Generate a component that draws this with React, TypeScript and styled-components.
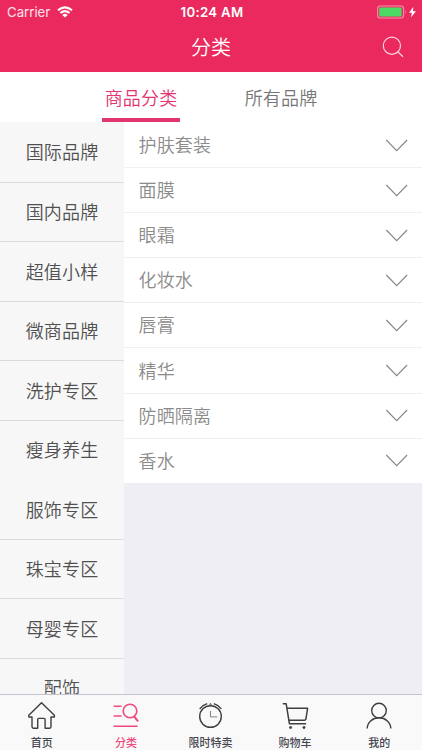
import React from "react";
import styled, { createGlobalStyle } from "styled-components";

const Global = createGlobalStyle`
  * { box-sizing: border-box; }
  html, body { margin: 0; padding: 0; }
  body { font-family: "Noto Sans CJK SC", "PingFang SC", sans-serif; background: #efeef4; }
`;

const Screen = styled.div`
  width: 422px;
  height: 750px;
  display: flex;
  flex-direction: column;
  overflow: hidden;
  background: #efeef4;
`;

const Header = styled.header`
  flex: none;
  height: 72px;
  background: #ea2a5f;
  color: #fff;
`;

const StatusBar = styled.div`
  height: 24px;
  display: grid;
  grid-template-columns: 1fr auto 1fr;
  align-items: center;
  padding: 0 5px 0 7px;
  font-family: Inter, "Liberation Sans", sans-serif;
`;

const Carrier = styled.div`
  display: flex;
  align-items: center;
  gap: 7px;
  font-size: 13.2px;
  line-height: 24px;
  color: #fde3ea;
`;

const Clock = styled.div`
  font-size: 13.2px;
  font-weight: 600;
  line-height: 24px;
  letter-spacing: 0.3px;
`;

const Battery = styled.div`
  display: flex;
  justify-content: flex-end;
`;

const TitleBar = styled.div`
  height: 48px;
  display: grid;
  grid-template-columns: 1fr auto 1fr;
  align-items: center;
  padding: 0 18px 2px;
`;

const Title = styled.h1`
  grid-column: 2;
  margin: 0;
  font-size: 20px;
  font-weight: 350;
  line-height: 30px;
`;

const SearchButton = styled.button`
  justify-self: end;
  display: flex;
  padding: 0;
  border: 0;
  background: none;
`;

const Tabs = styled.nav`
  flex: none;
  height: 50px;
  display: flex;
  justify-content: center;
  gap: 62px;
  background: #fff;
`;

const Tab = styled.div<{ $active?: boolean }>`
  width: 78px;
  height: 50px;
  padding-top: 11px;
  text-align: center;
  white-space: nowrap;
  font-size: 18px;
  line-height: 28px;
  font-weight: 350;
  letter-spacing: 0.15px;
  color: ${(p) => (p.$active ? "#e2356f" : "#777")};
  border-bottom: 4px solid ${(p) => (p.$active ? "#e2356f" : "transparent")};
`;

const Content = styled.main`
  flex: 1;
  min-height: 0;
  display: flex;
  overflow: hidden;
`;

const Sidebar = styled.aside`
  flex: none;
  width: 124px;
  background: #f7f7f7;
`;

const Category = styled.div<{ $divider: boolean }>`
  height: 59.55px;
  display: flex;
  align-items: center;
  justify-content: center;
  padding-bottom: 0.6px;
  font-size: 18px;
  line-height: 28px;
  font-weight: 350;
  letter-spacing: 0.15px;
  color: #505050;
  box-shadow: ${(p) => (p.$divider ? "0 1px 0 #dbdbdb" : "none")};
`;

const Sublist = styled.div`
  flex: 1;
`;

const SubRow = styled.div`
  height: 45.1px;
  display: flex;
  align-items: center;
  justify-content: space-between;
  padding: 0 14px 1px 14.5px;
  background: #fff;
  font-size: 18px;
  line-height: 28px;
  font-weight: 350;
  letter-spacing: 0.15px;
  color: #8b8b8b;
  svg { margin-top: 2px; }
  & + & { box-shadow: inset 0 1px 0 #f0f0f2; }
`;

const TabBar = styled.footer`
  flex: none;
  height: 56px;
  display: grid;
  grid-template-columns: repeat(5, 1fr);
  border-top: 1px solid #c5c4ce;
  background: #f9f9f9;
`;

const TabItem = styled.div<{ $active?: boolean }>`
  display: flex;
  flex-direction: column;
  align-items: center;
  padding: 5px 1px 0 0;
  font-size: 11px;
  line-height: 16px;
  font-weight: 500;
  color: ${(p) => (p.$active ? "#f04a7c" : "#47474f")};
  svg { margin-bottom: 4px; stroke: ${(p) => (p.$active ? "#f04a7c" : "#3f3f42")}; }
`;

const Icon = styled.svg`
  display: block;
  flex: none;
  fill: none;
`;

const categories = [
  "国际品牌", "国内品牌", "超值小样", "微商品牌", "洗护专区",
  "瘦身养生", "服饰专区", "珠宝专区", "母婴专区", "配饰",
];
const undivided = "瘦身养生";
const subcategories = ["护肤套装", "面膜", "眼霜", "化妆水", "唇膏", "精华", "防晒隔离", "香水"];

const Wifi = () => (
  <Icon width="16" height="12" viewBox="0 0 16 12" stroke="#fff" strokeWidth="2.1">
    <path d="M1 4.3 Q8 -1.6 15 4.3" />
    <path d="M3.4 7 Q8 3.1 12.6 7" />
    <path d="M8 11.6 L5.3 8.9 Q8 6.7 10.7 8.9Z" fill="#fff" stroke="none" />
  </Icon>
);

const BatteryIcon = () => (
  <Icon width="40" height="14" viewBox="0 0 40 14">
    <rect x="0.6" y="1" width="26" height="12" rx="2.5" stroke="#f58fa9" strokeWidth="1.1" />
    <rect x="2.2" y="2.6" width="22.4" height="8.8" rx="1" fill="#4cd964" />
    <path d="M28 5 q1.4 2 0 4z" fill="#f58fa9" />
    <path d="M36.3 2 L32 7.7 H34.9 L34 12.3 L39 6.2 H36Z" fill="#fff" />
  </Icon>
);

const SearchIcon = () => (
  <Icon width="22" height="22" viewBox="0 0 22 22" stroke="#ffd4df" strokeWidth="1.2">
    <circle cx="9.9" cy="9.7" r="8.6" />
    <path d="M15.8 15.8 L21 20.8" />
  </Icon>
);

const Chevron = () => (
  <Icon width="23" height="13" viewBox="0 0 23 13" stroke="#858585" strokeWidth="1.1">
    <path d="M1.3 1 L11.7 11.6 L22.1 1" />
  </Icon>
);

const HomeIcon = () => (
  <Icon width="30" height="30" viewBox="0 0 30 30" strokeWidth="1.4" strokeLinejoin="round">
    <path d="M14.5 2.7 L1.8 15.2 V17 H5 V26.8 Q5 28.2 6.4 28.2 H10.7 V19.5 Q10.7 18.4 11.8 18.4 H17 Q18.1 18.4 18.1 19.5 V28.2 H22.6 Q24 28.2 24 26.8 V17 H27.4 V15.2Z" />
  </Icon>
);

const CategoryIcon = () => (
  <Icon width="30" height="30" viewBox="0 0 30 30" strokeWidth="1.6">
    <path d="M2.6 6.3 H10.6 M2.6 16 H10.6 M2.6 26.3 H26.6" />
    <circle cx="19" cy="11" r="6.8" />
    <path d="M23 16.3 L27.1 21.3" strokeWidth="2" />
  </Icon>
);

const ClockIcon = () => (
  <Icon width="30" height="30" viewBox="-0.5 0 30 30" strokeWidth="1.4">
    <circle cx="15" cy="16.5" r="10.8" />
    <path d="M4.2 8.9 Q7 5 11.7 3.6 M18.3 3.6 Q23 5 25.8 8.9" strokeWidth="1.5" />
    <path d="M14.4 5 V3.8 H15.6 V5" strokeWidth="0.8" />
    <path d="M15 11 V16.9 H21.8" strokeWidth="0.9" opacity="0.7" />
  </Icon>
);

const CartIcon = () => (
  <Icon width="30" height="30" viewBox="0 0 30 30" strokeWidth="1.5" strokeLinejoin="round">
    <path d="M2.8 3.8 H6.2 L9.4 23.7 H26.1" />
    <path d="M6.9 8.3 H27.6 L25.9 19 Q25.6 20.2 24.4 20.2 H8.8" />
    <circle cx="10.6" cy="27.5" r="1.1" fill="#3f3f42" strokeWidth="0.8" />
    <circle cx="24" cy="27.5" r="1.1" fill="#3f3f42" strokeWidth="0.8" />
  </Icon>
);

const PersonIcon = () => (
  <Icon width="30" height="30" viewBox="0 0 30 30" strokeWidth="1.4">
    <circle cx="15" cy="10.6" r="7.3" />
    <path d="M3.2 28.5 A11.8 10.7 0 0 1 26.8 28.5" />
  </Icon>
);

const tabItems = [
  { label: "首页", Glyph: HomeIcon },
  { label: "分类", Glyph: CategoryIcon, active: true },
  { label: "限时特卖", Glyph: ClockIcon },
  { label: "购物车", Glyph: CartIcon },
  { label: "我的", Glyph: PersonIcon },
];

export default function App() {
  return (
    <>
      <Global />
      <Screen>
        <Header>
          <StatusBar>
            <Carrier>Carrier <Wifi /></Carrier>
            <Clock>10:24 AM</Clock>
            <Battery><BatteryIcon /></Battery>
          </StatusBar>
          <TitleBar>
            <Title>分类</Title>
            <SearchButton aria-label="搜索"><SearchIcon /></SearchButton>
          </TitleBar>
        </Header>
        <Tabs>
          <Tab $active>商品分类</Tab>
          <Tab>所有品牌</Tab>
        </Tabs>
        <Content>
          <Sidebar>
            {categories.map((name) => (
              <Category key={name} $divider={name !== undivided}>{name}</Category>
            ))}
          </Sidebar>
          <Sublist>
            {subcategories.map((name) => (
              <SubRow key={name}>{name}<Chevron /></SubRow>
            ))}
          </Sublist>
        </Content>
        <TabBar>
          {tabItems.map(({ label, Glyph, active }) => (
            <TabItem key={label} $active={active}><Glyph />{label}</TabItem>
          ))}
        </TabBar>
      </Screen>
    </>
  );
}
